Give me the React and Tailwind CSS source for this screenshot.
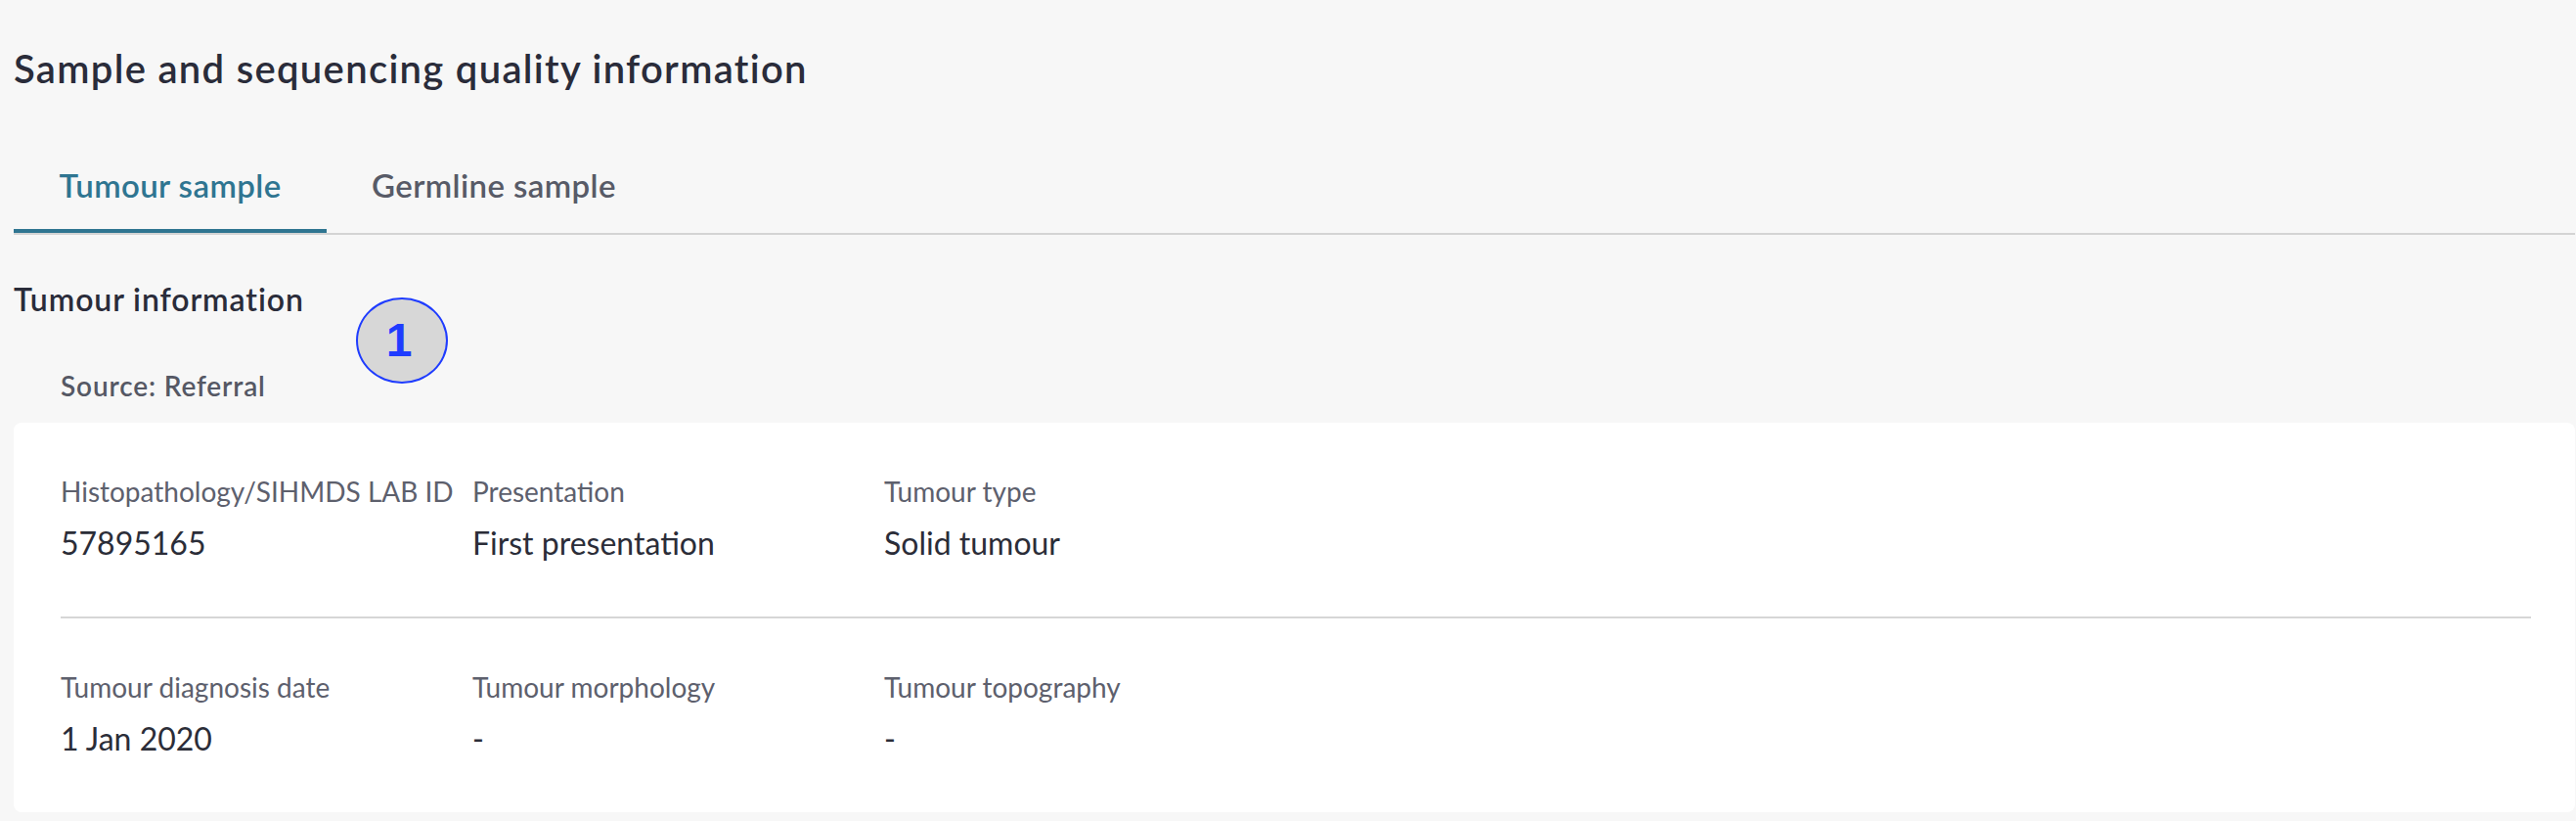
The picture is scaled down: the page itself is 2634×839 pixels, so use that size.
import React from "react";

const rows = [
  [
    { label: "Histopathology/SIHMDS LAB ID", value: "57895165" },
    { label: "Presentation", value: "First presentation" },
    { label: "Tumour type", value: "Solid tumour" },
  ],
  [
    { label: "Tumour diagnosis date", value: "1 Jan 2020" },
    { label: "Tumour morphology", value: "-" },
    { label: "Tumour topography", value: "-" },
  ],
];

function Row({ items }) {
  return (
    <div className="grid grid-cols-6 pt-[50px] pb-[53px]">
      {items.map((it) => (
        <div key={it.label} className="flex flex-col gap-[11px]">
          <div className="text-[28px] leading-[40px] text-[#5d606d] whitespace-nowrap">{it.label}</div>
          <div className="text-[32px] leading-[44px] text-[#2b2d38] whitespace-nowrap">{it.value}</div>
        </div>
      ))}
    </div>
  );
}

export default function App() {
  return (
    <div className="relative w-[2634px] h-[839px] bg-[#f7f7f7] pl-[14px] pr-[1px] overflow-hidden font-['Lato','Noto_Sans',sans-serif]">
      <h1 className="pt-[46px] text-[40px] leading-[48px] font-semibold text-[#2a2c3a] tracking-[1.3px]">
        Sample and sequencing quality information
      </h1>

      <div className="mt-[71px] flex border-b-2 border-[#d4d4d4]">
        <div className="w-[320px] h-[73px] border-b-4 border-[#2f7591] text-center text-[33px] leading-[48px] font-semibold text-[#2f7591] tracking-[0.4px]">
          Tumour sample
        </div>
        <div className="px-[46px] h-[73px] text-[33px] leading-[48px] font-semibold text-[#585b67] tracking-[0.4px]">
          Germline sample
        </div>
      </div>

      <div className="mt-[46px] text-[32px] leading-[40px] font-semibold text-[#2a2c3a] tracking-[0.9px]">
        Tumour information
      </div>
      <div className="mt-[48px] pl-[48px] text-[28px] leading-[40px] font-semibold text-[#555864] tracking-[0.85px]">
        Source: Referral
      </div>

      <div className="mt-[18px] bg-white rounded-lg pl-[48px] pr-[45px]">
        <Row items={rows[0]} />
        <div className="h-[2px] bg-[#d6d6d6]" />
        <Row items={rows[1]} />
      </div>

      <div className="absolute left-[364px] top-[304px] w-[94px] h-[88px] rounded-[50%] border-2 border-[#1f3cff] bg-[#d7d7d7] flex items-center justify-center">
        <span className="font-['Liberation_Sans',Arial,sans-serif] text-[48px] leading-none font-bold text-[#1f3cff] -translate-x-[3px]">
          1
        </span>
      </div>
    </div>
  );
}
